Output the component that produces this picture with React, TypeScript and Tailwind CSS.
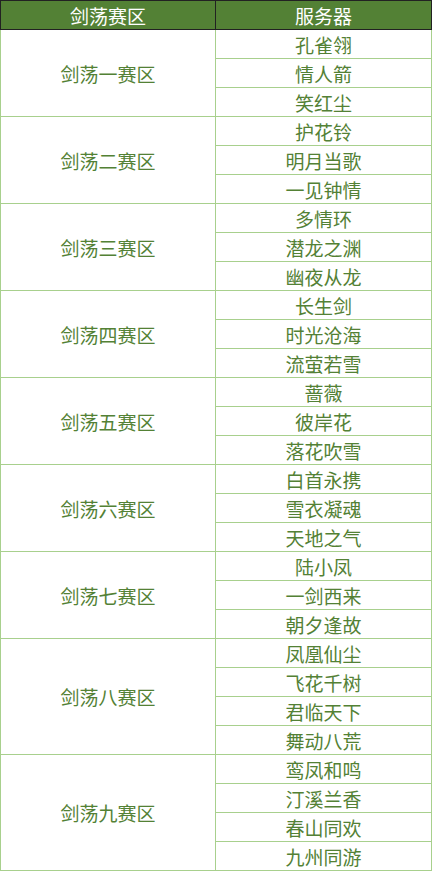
import React from "react";

const groups: { name: string; servers: string[] }[] = [
  { name: "剑荡一赛区", servers: ["孔雀翎", "情人箭", "笑红尘"] },
  { name: "剑荡二赛区", servers: ["护花铃", "明月当歌", "一见钟情"] },
  { name: "剑荡三赛区", servers: ["多情环", "潜龙之渊", "幽夜从龙"] },
  { name: "剑荡四赛区", servers: ["长生剑", "时光沧海", "流萤若雪"] },
  { name: "剑荡五赛区", servers: ["蔷薇", "彼岸花", "落花吹雪"] },
  { name: "剑荡六赛区", servers: ["白首永携", "雪衣凝魂", "天地之气"] },
  { name: "剑荡七赛区", servers: ["陆小凤", "一剑西来", "朝夕逢故"] },
  { name: "剑荡八赛区", servers: ["凤凰仙尘", "飞花千树", "君临天下", "舞动八荒"] },
  { name: "剑荡九赛区", servers: ["鸾凤和鸣", "汀溪兰香", "春山同欢", "九州同游"] },
];

export default function App() {
  return (
    <div className="bg-white w-[433px] min-h-[873px]" style={{ fontFamily: '"Noto Sans CJK SC", "Noto Sans", sans-serif' }}>
      <table className="border-collapse table-fixed w-[431px] text-[19px] leading-none">
        <colgroup>
          <col className="w-[215px]" />
          <col className="w-[216px]" />
        </colgroup>
        <thead>
          <tr className="h-[29px] bg-[#538135] text-white">
            <th className="border border-[#222] font-normal text-center p-0">剑荡赛区</th>
            <th className="border border-[#222] font-normal text-center p-0">服务器</th>
          </tr>
        </thead>
        <tbody className="text-[#538135]">
          {groups.map((g) =>
            g.servers.map((s, i) => (
              <tr key={g.name + s} className="h-[29px]">
                {i === 0 && (
                  <td rowSpan={g.servers.length} className="border border-[#a8d08d] text-center p-0">
                    {g.name}
                  </td>
                )}
                <td className="border border-[#a8d08d] text-center p-0">{s}</td>
              </tr>
            ))
          )}
        </tbody>
      </table>
    </div>
  );
}
